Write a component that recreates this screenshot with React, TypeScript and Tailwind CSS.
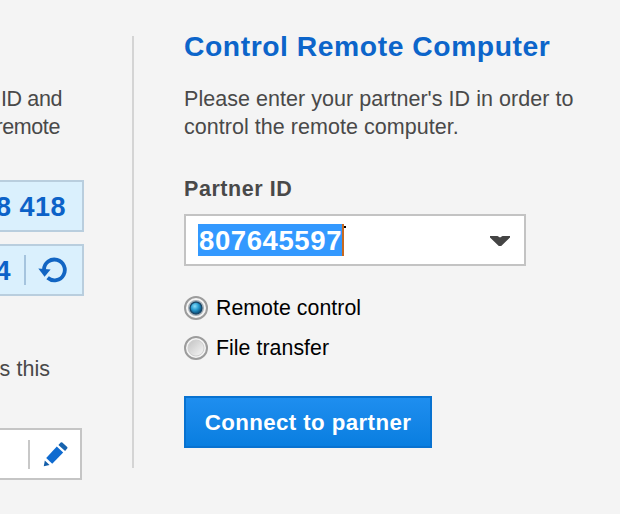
import type { ReactNode } from "react";

function IdBox({ children, className = "" }: { children: ReactNode; className?: string }) {
  return (
    <div className={`flex h-[52px] items-center justify-end border-2 border-l-0 border-[#b9cede] bg-[#daf0fd] text-[27px] font-bold tracking-[0.5px] text-[#0c62c8] ${className}`}>
      {children}
    </div>
  );
}

function RefreshIcon() {
  return (
    <svg width="30" height="28" viewBox="0 0 30 28" className="block shrink-0">
      <path d="M6 13.6A10.4 10.4 0 1 1 9.6 21.8" fill="none" stroke="#1265c3" strokeWidth="3.8" />
      <path d="M0.3 12.4 12.6 13.6 6.6 20.8z" fill="#1265c3" />
    </svg>
  );
}

function PencilIcon() {
  return (
    <svg width="26" height="26" viewBox="0 0 26 26" className="block shrink-0">
      <path d="M1.8 25.2 2.8 19.4 7.6 24z" fill="#135da8" />
      <path d="M4.2 17 14.8 5.6 21.2 11.4 10.2 22.8z" fill="#0f6bd0" />
      <path d="M16.4 4 18.7 1.5Q19.5 0.8 20.3 1.5L25.2 6Q25.9 6.7 25.2 7.5L23.1 9.9z" fill="#1763ae" />
    </svg>
  );
}

function Radio({ label, checked = false }: { label: string; checked?: boolean }) {
  return (
    <label className="flex h-10 items-center gap-2 text-[21.3px] tracking-[0.05px] text-black">
      <svg width="24" height="24" viewBox="0 0 24 24" className="block shrink-0">
        <defs>
          <radialGradient id="dot" cx="0.4" cy="0.35" r="0.6">
            <stop offset="0" stopColor="#8bdcf7" />
            <stop offset="0.5" stopColor="#2c9fd2" />
            <stop offset="1" stopColor="#0b5584" />
          </radialGradient>
          <linearGradient id="well" x1="0" y1="0" x2="1" y2="1">
            <stop offset="0" stopColor="#c2c2c2" />
            <stop offset="1" stopColor="#f7f7f7" />
          </linearGradient>
        </defs>
        <circle cx="12" cy="12" r="11" fill="#f4f4f4" stroke="#9c9c9c" strokeWidth="2" />
        {checked ? (
          <>
            <circle cx="12" cy="12" r="7.4" fill="#d9e2e7" stroke="#a3adb4" strokeWidth="1.2" />
            <circle cx="12" cy="12" r="6" fill="url(#dot)" stroke="#1b4666" strokeWidth="1.4" />
          </>
        ) : (
          <circle cx="12" cy="12" r="8" fill="url(#well)" stroke="#d0d0d0" strokeWidth="1" />
        )}
      </svg>
      <span>{label}</span>
    </label>
  );
}

export default function App() {
  return (
    <div className="flex h-[514px] w-[620px] overflow-hidden bg-[#f4f4f4] font-['Liberation_Sans',Arial,sans-serif] text-[21.5px] leading-7 tracking-[0.04px] whitespace-nowrap text-[#494949]">
      <section className="flex w-[132px] shrink-0 flex-col items-start overflow-hidden pt-[85px]">
        <div className="flex w-[62px] flex-col items-end tracking-[-0.4px]">
          <p>ID and</p>
          <p className="pr-[2px]">remote</p>
        </div>
        <IdBox className="mt-[39px] w-[84px] pr-[16px]">
          <span className="pt-[2px]">8 418</span>
        </IdBox>
        <IdBox className="mt-3 w-[84px] pr-[14px]">
          <span className="pt-[2px]">4</span>
          <span className="mr-[12px] ml-[13px] h-[30px] w-[2px] shrink-0 bg-[#a5c4de]" />
          <RefreshIcon />
        </IdBox>
        <p className="mt-[59px] flex w-[50px] justify-end">s this</p>
        <div className="mt-[45px] flex h-[52px] w-[82px] items-center justify-end border-2 border-l-0 border-[#c5c5c5] bg-white pr-[12px]">
          <span className="mr-[12px] h-[29px] w-[2px] bg-[#c8c8c8]" />
          <PencilIcon />
        </div>
      </section>
      <div className="mt-9 h-[432px] w-[2px] shrink-0 bg-[#d4d4d4]" />
      <section className="flex flex-col items-start pt-[30px] pl-[50px]">
        <h1 className="text-[28.3px] leading-8 font-bold tracking-[0.55px] text-[#0c65ca]">Control Remote Computer</h1>
        <p className="mt-[23px]">
          Please enter your partner's ID in order to
          <br />
          control the remote computer.
        </p>
        <h2 className="mt-[34px] font-bold tracking-[0.55px]">Partner ID</h2>
        <div className="mt-[11px] flex h-[52px] w-[342px] items-center justify-between border-2 border-[#c3c3c3] bg-white pr-[14px] pl-[12px]">
          <div className="flex">
            <span className="flex h-8 w-[144px] items-center bg-[#3399ff] pt-[2px] pl-px text-[27.5px] font-bold tracking-[0.6px] text-white">807645597</span>
            <span className="h-8 w-[2px] bg-[#c96a20]" />
            <span className="mt-[2px] h-[2px] w-[2px] bg-black" />
          </div>
          <svg width="20" height="10" viewBox="0 0 20 10" className="mt-[2px] block">
            <path d="M0 0H7.5L10 1.6 12.5 0H20V1.4L11.2 10H8.8L0 1.4z" fill="#444" />
          </svg>
        </div>
        <div className="mt-[22px]">
          <Radio label="Remote control" checked />
          <Radio label="File transfer" />
        </div>
        <button className="mt-7 h-[52px] w-[248px] border-2 border-[#0872d0] bg-linear-to-b from-[#1e8eef] to-[#087ee0] pt-[2px] text-[22.3px] font-bold tracking-[0.4px] text-white">
          Connect to partner
        </button>
      </section>
    </div>
  );
}
